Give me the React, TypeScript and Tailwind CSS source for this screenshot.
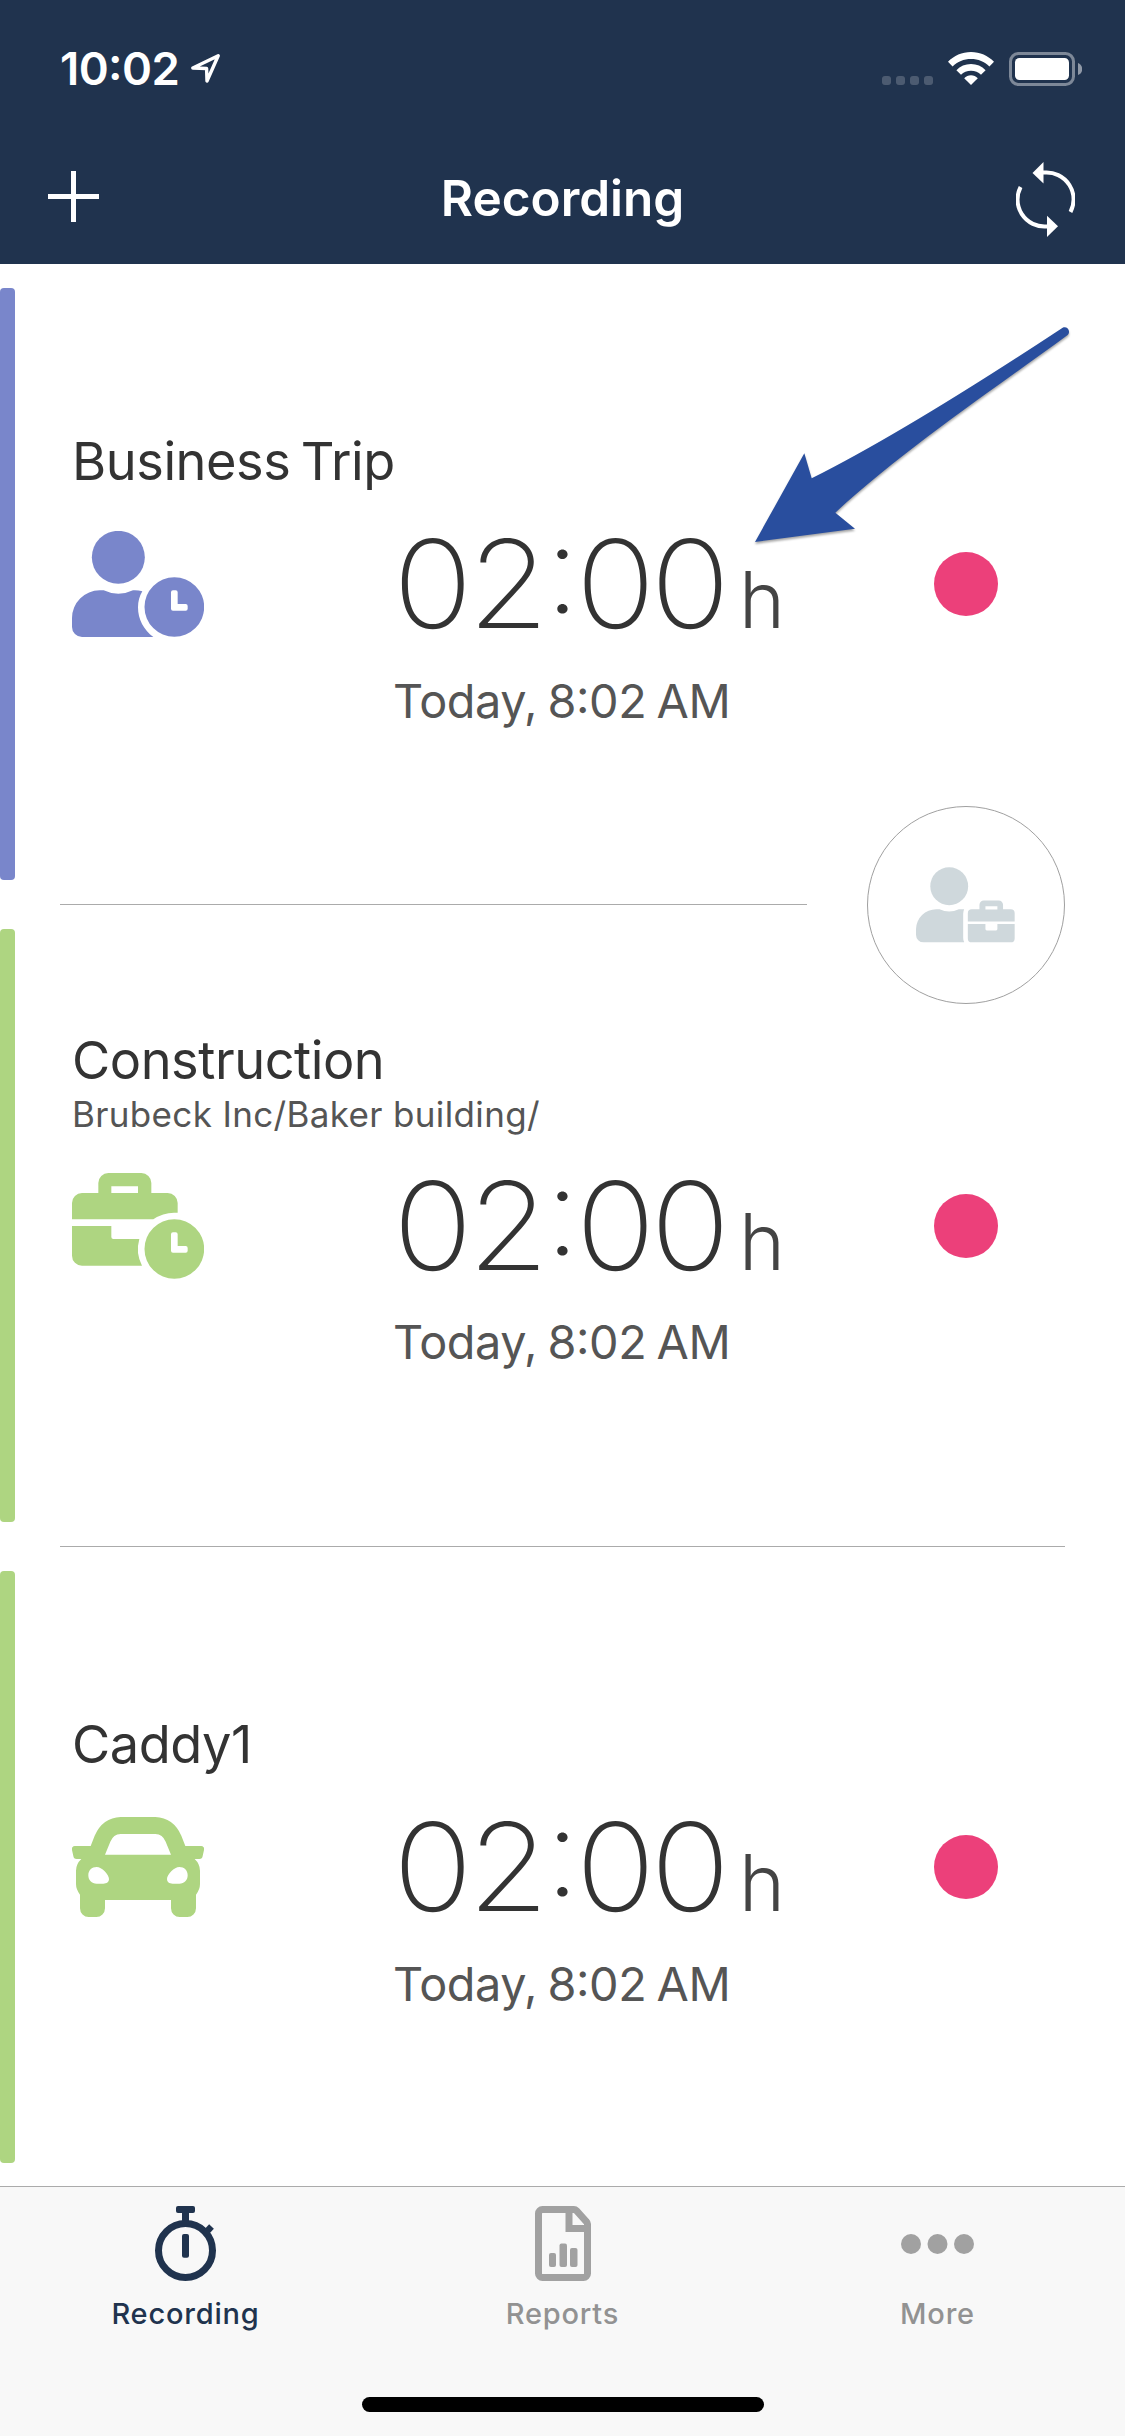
import { clsx } from "clsx";
import type { ReactNode } from "react";

type Entry = {
  title: string;
  path?: string;
  icon: ReactNode;
  tone: "indigo" | "green";
  start: string;
  duration: [string, string];
};

function LocationArrow() {
  return (
    <svg viewBox="0 0 29 31" className="h-[31px] w-[29px]" fill="none" stroke="white" strokeWidth="3.4" strokeLinejoin="round">
      <path d="M1.800 16 27.200 3.800 16 29 15.600 16.500Z" />
    </svg>
  );
}

function WifiIcon() {
  return (
    <svg viewBox="0 0 46 33" className="h-[33px] w-[46px]" fill="white">
      <path d="M0 9.800C6 3.600 14 0 23 0s17 3.600 23 9.800l-4.600 4.600C36.600 9.600 30.200 7 23 7S9.400 9.600 4.600 14.400Z" />
      <path d="M8.400 18.200C12.200 14.200 17.300 12 23 12s10.800 2.200 14.600 6.200L33 22.800C30.400 20.200 27 18.800 23 18.800s-7.400 1.400-10 4Z" />
      <path d="M16.200 26.300C18 24.300 20.400 23.200 23 23.200s5 1.100 6.800 3.100L23 33Z" />
    </svg>
  );
}

function BatteryIcon() {
  return (
    <svg viewBox="0 0 73 34" className="h-[34px] w-[73px]">
      <rect x="1.500" y="1.500" width="63" height="31" rx="8" fill="none" stroke="white" strokeOpacity="0.42" strokeWidth="3" />
      <rect x="6" y="6" width="54" height="22" rx="4.500" fill="white" />
      <path d="M69 11c2.600 1 4.200 3.200 4.200 6s-1.600 5-4.200 6Z" fill="white" fillOpacity="0.5" />
    </svg>
  );
}

function SyncIcon() {
  return (
    <svg viewBox="1016 162 59 75" className="h-[75px] w-[59px]" fill="white">
      <g fill="none" stroke="white" strokeWidth="4">
        <path d="M1042 172.500H1045.500A27 27 0 0 1 1070.500 212" />
        <path d="M1020.600 187A27 27 0 0 0 1045.500 226.500H1049" />
      </g>
      <path d="M1032.500 173 1043.500 162V183.500Z" />
      <path d="M1058 226.200 1047 215.800V237Z" />
    </svg>
  );
}

function UserClockIcon() {
  return (
    <svg viewBox="216 393 396 318" className="h-[106px] w-[132px]" fill="currentColor">
      <circle cx="355" cy="472" r="79.500" />
      <path d="M299 571h12q44 21 88 0q14-1 28 3q-13 22-13 48c0 36 17 68 46 89H246a30 30 0 0 1-30-30V654a83 83 0 0 1 83-83Z" />
      <path
        fillRule="evenodd"
        d="M523 531.500a89.500 89.500 0 1 1 0 179a89.500 89.500 0 1 1 0-179ZM519 571a6 6 0 0 0-6 6V626a6 6 0 0 0 6 6H557a6 6 0 0 0 6-6V618a6 6 0 0 0-6-6H533V577a6 6 0 0 0-6-6Z"
      />
    </svg>
  );
}

function BriefcaseClockIcon() {
  return (
    <svg viewBox="216 519 396 318" className="h-[106px] w-[132px]" fill="currentColor">
      <path
        fillRule="evenodd"
        d="M216 658V609a30 30 0 0 1 30-30H295V549a30 30 0 0 1 30-30H424a30 30 0 0 1 30 30V579H503a30 30 0 0 1 30 30V638.500A109 109 0 0 0 460 658ZM334 559V579H414V559Z"
      />
      <path d="M216 678H334V711a6 6 0 0 0 6 6H418A109 109 0 0 0 426 797H246a30 30 0 0 1-30-30Z" />
      <path
        fillRule="evenodd"
        d="M523 657.500a89.500 89.500 0 1 1 0 179a89.500 89.500 0 1 1 0-179ZM519 697a6 6 0 0 0-6 6V752a6 6 0 0 0 6 6H557a6 6 0 0 0 6-6V744a6 6 0 0 0-6-6H533V703a6 6 0 0 0-6-6Z"
      />
    </svg>
  );
}

function CarIcon() {
  return (
    <svg viewBox="216 411 396 300" className="h-[100px] w-[132px]" fill="currentColor">
      <path
        fillRule="evenodd"
        d="M362 411H466Q520 413 544 467L556 498H603a9 9 0 0 1 9 12l-4 18a10 10 0 0 1-10 9H584q16 15 16 35V612q0 16-12 32V685a26 26 0 0 1-26 26H539a26 26 0 0 1-26-26V660H315V685a26 26 0 0 1-26 26H266a26 26 0 0 1-26-26V644q-12-16-12-32V572q0-20 16-35H230a10 10 0 0 1-10-9l-4-18a9 9 0 0 1 9-12H272L284 467Q308 413 362 411ZM362 462Q340 463 331 485L315 524H513L497 485Q488 463 466 462ZM265 586c0 15 10 25 25 25h20c10 0 17-5 17-14c0-14-22-36-37-36c-15 0-25 10-25 25ZM563 586c0 15-10 25-25 25h-20c-10 0-17-5-17-14c0-14 22-36 37-36c15 0 25 10 25 25Z"
      />
    </svg>
  );
}

function UserBriefcaseIcon() {
  return (
    <svg viewBox="408 262 298 227" className="mr-[2px] h-[76px] w-[99px]" fill="currentColor">
      <circle cx="508" cy="319" r="57" />
      <path d="M408 448A61 61 0 0 1 469 388H479q29 14 58 0H553q-3 6-3 14V474q0 8 3 14H431a23 23 0 0 1-23-23Z" />
      <path fillRule="evenodd" d="M564 425V400a12 12 0 0 1 12-12H599V375a13 13 0 0 1 13-13H657a13 13 0 0 1 13 13V388H693a12 12 0 0 1 12 12V425ZM617 379V389H653V379Z" />
      <path d="M564 433H617V448a4 4 0 0 0 4 4H649a4 4 0 0 0 4-4V433H705V476a12 12 0 0 1-12 12H576a12 12 0 0 1-12-12Z" />
    </svg>
  );
}

function StopwatchIcon() {
  return (
    <svg viewBox="0 0 61 75" className="h-[75px] w-[61px]" fill="currentColor">
      <circle cx="30.500" cy="44.500" r="27" fill="none" stroke="currentColor" strokeWidth="7" />
      <rect x="21" y="0" width="19" height="7" rx="2" />
      <rect x="27" y="5" width="7" height="13" />
      <rect x="27" y="28" width="7" height="23.700" rx="2" />
      <path d="M50 27.500 56.500 20.500" stroke="currentColor" strokeWidth="6.500" />
    </svg>
  );
}

function ReportIcon() {
  return (
    <svg viewBox="0 0 56 75" className="h-[75px] w-[56px]" fill="currentColor">
      <path
        d="M3.500 7.500a4 4 0 0 1 4-4H38.500a4 4 0 0 1 3 1.200L51.300 15.500a4 4 0 0 1 1.200 3V67.500a4 4 0 0 1-4 4H7.500a4 4 0 0 1-4-4ZM34 4V22.500H52"
        fill="none"
        stroke="currentColor"
        strokeWidth="7"
      />
      <rect x="14" y="47" width="7" height="14" rx="2" />
      <rect x="24.500" y="37.500" width="7.500" height="23.500" rx="2" />
      <rect x="35" y="42" width="7.500" height="19" rx="2" />
    </svg>
  );
}

function MoreIcon() {
  return (
    <svg viewBox="0 0 73 75" className="h-[75px] w-[73px]" fill="currentColor">
      <circle cx="10" cy="38" r="10" />
      <circle cx="36.500" cy="38" r="10" />
      <circle cx="63" cy="38" r="10" />
    </svg>
  );
}

function PointerArrow() {
  return (
    <svg viewBox="0 0 1200 1020" className="pointer-events-none absolute left-[720px] top-[300px] h-[340px] w-[400px] drop-shadow-[0_2px_1px_rgba(0,0,0,0.35)]" fill="#294e9e">
      <path d="M105 726 253 460 275 535Q560 392 1028 83C1041 77 1054 93 1043 105C850 248 560 440 346 638L405 686Z" />
    </svg>
  );
}

const entries: Entry[] = [
  { title: "Business Trip", icon: <UserClockIcon />, tone: "indigo", start: "Today, 8:02 AM", duration: ["02", "00"] },
  { title: "Construction", path: "Brubeck Inc/Baker building/", icon: <BriefcaseClockIcon />, tone: "green", start: "Today, 8:02 AM", duration: ["02", "00"] },
  { title: "Caddy1", icon: <CarIcon />, tone: "green", start: "Today, 8:02 AM", duration: ["02", "00"] },
];

function StatusBar() {
  return (
    <div className="flex h-[132px] justify-between pl-[60px] pr-[43px] pt-[52px]">
      <div className="flex items-start gap-[12px]">
        <span className="text-[45.5px] font-semibold leading-[34px] tracking-[-0.6px]">10:02</span>
        <LocationArrow />
      </div>
      <div className="flex items-start">
        <div className="mr-[15px] mt-[24px] flex gap-[5px]">
          {[0, 1, 2, 3].map((i) => (
            <span key={i} className="size-[9px] rounded-[3px] bg-white/20" />
          ))}
        </div>
        <WifiIcon />
        <div className="ml-[15px]">
          <BatteryIcon />
        </div>
      </div>
    </div>
  );
}

function NavBar() {
  return (
    <div className="flex h-[132px] items-center justify-between pl-[48px] pr-[50px]">
      <button aria-label="Add" className="mb-[3px] w-[61px]">
        <svg viewBox="0 0 51 51" className="h-[51px] w-[51px]" stroke="white" strokeWidth="5">
          <path d="M25.500 0V51M0 25.500H51" />
        </svg>
      </button>
      <h1 className="text-[49.500px] font-semibold leading-[64px]">Recording</h1>
      <button aria-label="Sync" className="mt-[3px]">
        <SyncIcon />
      </button>
    </div>
  );
}

function EntryRow({ entry, divider }: { entry: Entry; divider?: "short" | "full" }) {
  const bar = { indigo: "bg-[#7986cb]", green: "bg-[#aed581]" }[entry.tone];
  const ink = { indigo: "text-[#7986cb]", green: "text-[#aed581]" }[entry.tone];
  return (
    <li className={clsx("flex flex-col", divider === "short" ? "h-[641px]" : divider ? "h-[642px]" : "h-[639px]")}>
      <div className="flex min-h-0 flex-1">
        <div className={clsx("mt-[24px] w-[15px] rounded-[4px]", bar, entry.path ? "h-[593px]" : "h-[592px]")} />
        <div className="flex flex-1 flex-col pl-[57px]">
          <div className={clsx(entry.path ? "h-[251px] pt-[123px]" : "h-[250px] pt-[165px]")}>
            <h2 className="text-[52.300px] leading-[64px] tracking-[-0.450px] text-[#333] [word-spacing:-4px]">{entry.title}</h2>
            {entry.path && <p className="text-[35px] leading-[44px] tracking-[0.35px] text-[#555]">{entry.path}</p>}
          </div>
          <div className="flex h-[140px] items-center">
            <div className={clsx("w-[321px]", ink)}>{entry.icon}</div>
            <div className="flex w-[541px] items-baseline leading-[140px]">
              <span className="inline-block w-[346px] origin-left scale-x-[1.08] whitespace-nowrap text-[122px] font-extralight tracking-[-4.500px] text-[#333]">
                {entry.duration[0]}
                <span className="relative -top-[2px]">:</span>
                {entry.duration[1]}
              </span>
              <span className="text-[78px] font-light leading-none text-[#444]">h</span>
            </div>
            <span className="size-[64px] rounded-full bg-[#ec407a]" />
          </div>
          <p
            className={clsx(
              "pl-[321px] text-[46.800px] leading-[60px] tracking-[-0.400px] text-[#555] [word-spacing:-2.500px]",
              entry.path ? "mt-[16px]" : "mt-[17px]",
            )}
          >
            {entry.start}
          </p>
        </div>
      </div>
      {divider && <hr className={clsx("ml-[60px] border-0 h-px bg-[#ababab]", divider === "short" ? "w-[747px]" : "w-[1005px]")} />}
    </li>
  );
}

function Tab({ icon, label, active }: { icon: ReactNode; label: string; active?: boolean }) {
  return (
    <button className={clsx("flex flex-col items-center", active ? "pr-[4px] text-[#20334e]" : "text-[#a1a1a1]")}>
      {icon}
      <span className={clsx("mt-[15px] text-[29px] font-medium leading-[36px] tracking-[0.8px]", !active && "text-[#929292]")}>{label}</span>
    </button>
  );
}

export default function App() {
  return (
    <div className="relative flex h-[2436px] w-[1125px] flex-col overflow-hidden bg-white font-['Inter',sans-serif] [font-feature-settings:'calt']">
      <header className="h-[264px] bg-[#20334e] text-white">
        <StatusBar />
        <NavBar />
      </header>

      <ul className="flex-1">
        <EntryRow entry={entries[0]} divider="short" />
        <EntryRow entry={entries[1]} divider="full" />
        <EntryRow entry={entries[2]} />
      </ul>

      <footer className="flex h-[250px] flex-col items-center border-t border-[#ababab] bg-[#f8f8f8] pt-[19px]">
        <nav className="grid w-full grid-cols-3">
          <Tab icon={<StopwatchIcon />} label="Recording" active />
          <Tab icon={<ReportIcon />} label="Reports" />
          <Tab icon={<MoreIcon />} label="More" />
        </nav>
        <div className="mt-[65px] h-[15px] w-[402px] rounded-full bg-black" />
      </footer>

      {/* floating switch button sits over the first divider */}
      <button aria-label="Switch" className="absolute left-[867px] top-[806px] flex size-[198px] items-center justify-center rounded-full border border-[#a0a0a0] bg-white text-[#cfd8dc]">
        <UserBriefcaseIcon />
      </button>
      <PointerArrow />
    </div>
  );
}
